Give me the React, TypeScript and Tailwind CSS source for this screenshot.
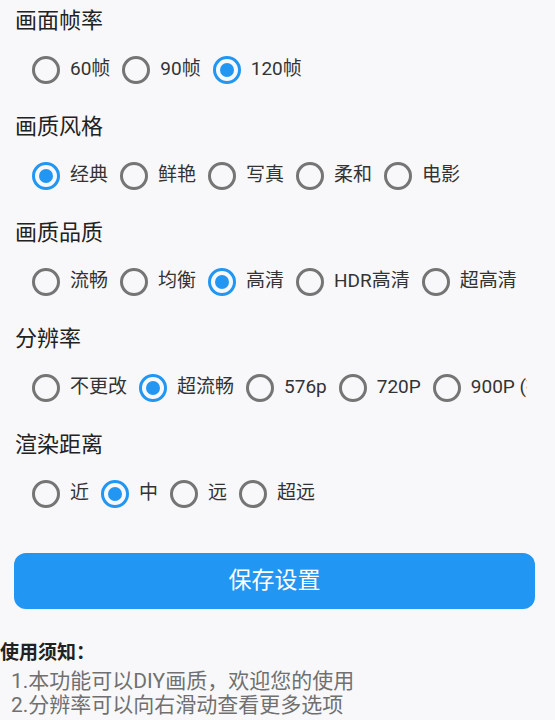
import React from 'react';

const sections = [
  { title: '画面帧率', options: ['60帧', '90帧', '120帧'], selected: 2 },
  { title: '画质风格', options: ['经典', '鲜艳', '写真', '柔和', '电影'], selected: 0 },
  { title: '画质品质', options: ['流畅', '均衡', '高清', 'HDR高清', '超高清'], selected: 2 },
  { title: '分辨率', options: ['不更改', '超流畅', '576p', '720P', '900P (推荐)', '1080P'], selected: 1, clip: true },
  { title: '渲染距离', options: ['近', '中', '远', '超远'], selected: 1 },
];

const Radio = ({ label, checked }: { label: string; checked: boolean }) => (
  <div className="flex items-center shrink-0 mr-[12px]">
    <div
      className={`w-[28px] h-[28px] rounded-full border-[3px] flex items-center justify-center ${
        checked ? 'border-[#2196F3]' : 'border-[#757575]'
      }`}
    >
      {checked && <div className="w-[14px] h-[14px] rounded-full bg-[#2196F3]" />}
    </div>
    <span className="ml-[10px] text-[19px] text-[#333333] whitespace-nowrap">{label}</span>
  </div>
);

export default function App() {
  return (
    <div
      className="w-[555px] h-[720px] overflow-hidden bg-[#f8f8fa] pt-[3px]"
      style={{ fontFamily: 'Roboto, "Noto Sans CJK SC", sans-serif' }}
    >
      {sections.map((s) => (
        <div key={s.title} className="mb-[9px]">
          <div className="h-[36px] leading-[36px] pl-[15px] text-[22px] text-[#222222]">{s.title}</div>
          <div className={`h-[61px] flex items-center pl-[32px] overflow-hidden ${s.clip ? 'mr-[28px]' : ''}`}>
            {s.options.map((o, i) => (
              <Radio key={o} label={o} checked={i === s.selected} />
            ))}
          </div>
        </div>
      ))}

      <button className="mt-[29px] ml-[14px] w-[521px] h-[56px] rounded-[12px] bg-[#2196F3] text-white text-[23px] flex items-center justify-center">
        保存设置
      </button>

      <div className="mt-[32px] text-[19px] font-bold leading-[24px] text-[#222222]">使用须知：</div>
      <div className="mt-[4px] pl-[11px] text-[21px] leading-[24px] text-[#707070]">
        <div>1.本功能可以DIY画质，欢迎您的使用</div>
        <div>2.分辨率可以向右滑动查看更多选项</div>
      </div>
    </div>
  );
}
